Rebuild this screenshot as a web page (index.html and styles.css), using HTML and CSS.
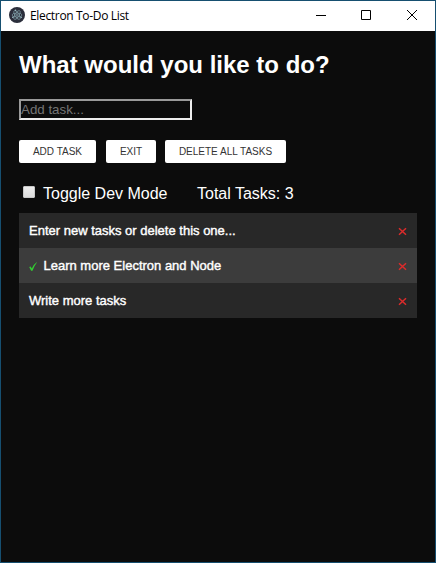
FILE: index.html
```html
<!DOCTYPE html>
<html lang="en">
<head>
<meta charset="utf-8">
<title>Electron To-Do List</title>
<link rel="stylesheet" href="styles.css">
</head>
<body>
<div class="window">
  <header class="titlebar">
    <svg class="logo" width="16" height="16" viewBox="0 0 16 16">
      <circle cx="8" cy="8" r="8" fill="#2b2e3b"/>
      <g fill="none" stroke="#7f9ea8" stroke-width=".7">
        <ellipse cx="8" cy="8" rx="5" ry="2"/>
        <ellipse cx="8" cy="8" rx="5" ry="2" transform="rotate(60 8 8)"/>
        <ellipse cx="8" cy="8" rx="5" ry="2" transform="rotate(120 8 8)"/>
      </g>
      <g fill="#a2c4cc"><circle cx="8" cy="8" r=".8"/><circle cx="3.8" cy="10.2" r=".8"/><circle cx="12.2" cy="10.2" r=".8"/><circle cx="6.5" cy="3.2" r=".8"/></g>
    </svg>
    <span class="caption">Electron To-Do List</span>
    <svg class="control" width="46" height="30" viewBox="0 0 46 30"><path d="M18 14.5h10"/></svg>
    <svg class="control" width="45" height="30" viewBox="0 0 45 30"><path d="M17.5 9.5h9v9h-9z"/></svg>
    <svg class="control" width="46" height="30" viewBox="0 0 46 30"><path d="M18 9l10 10M28 9l-10 10"/></svg>
  </header>
  <main class="content">
    <h1 class="heading">What would you like to do?</h1>
    <input class="task-input" type="text" placeholder="Add task...">
    <div class="actions">
      <button class="button add">ADD TASK</button>
      <button class="button exit">EXIT</button>
      <button class="button clear">DELETE ALL TASKS</button>
    </div>
    <div class="status">
      <label class="dev-mode"><input class="checkbox" type="checkbox"><span>Toggle Dev Mode</span></label>
      <span>Total Tasks: 3</span>
    </div>
    <ul class="tasks">
      <li class="task"><span class="name">Enter new tasks or delete this one...</span><svg class="remove" width="9" height="9" viewBox="0 0 9 9"><path d="M1 1.2l7 6.6M8 1.2L1 7.8"/></svg></li>
      <li class="task done"><svg class="check" width="8" height="9" viewBox="0 0 8 9"><path d="M.2 5L1.6 4.4L2.8 6.4Q4.5 2.4 7.6.2L7.9.6Q5.2 4 3.5 8.7H2.1Z"/></svg><span class="name">Learn more Electron and Node</span><svg class="remove" width="9" height="9" viewBox="0 0 9 9"><path d="M1 1.2l7 6.6M8 1.2L1 7.8"/></svg></li>
      <li class="task"><span class="name">Write more tasks</span><svg class="remove" width="9" height="9" viewBox="0 0 9 9"><path d="M1 1.2l7 6.6M8 1.2L1 7.8"/></svg></li>
    </ul>
  </main>
</div>
</body>
</html>
```
FILE: styles.css
```css
* { box-sizing: border-box; }
body { margin: 0; font-family: "Liberation Sans", Arial, sans-serif; color: #fff; }
.window { height: 563px; border: 1px solid #164f70; background: #0c0c0c; overflow: hidden; }
.titlebar { display: flex; align-items: center; height: 30px; padding-left: 8px; background: #fff; color: #000; }
.logo { margin-top: -2px; }
.caption { flex: 1; margin: 0 0 0 5px; font: 12px/16px "Open Sans", sans-serif; letter-spacing: -.33px; white-space: nowrap; }
.control { fill: none; stroke: #000; stroke-width: 1; }
.content { padding: 20px 18px 0; }
.heading { margin: 0; font-size: 24px; line-height: 28px; }
.task-input { display: block; width: 173px; height: 21px; margin-top: 20px; padding: 0; border: 2px solid; border-color: #9a9a9a #eee #eee #9a9a9a; background: #0c0c0c; color: #fff; font: 13.33px "Liberation Sans", sans-serif; }
.task-input::placeholder { color: #757575; opacity: 1; }
.actions { display: flex; margin-top: 20px; }
.button { height: 23px; padding: 0; border: 0; border-radius: 2px; background: #fff; color: #333; font: 10px "Liberation Sans", sans-serif; white-space: nowrap; }
.add { width: 77px; margin-right: 10px; }
.exit { width: 50px; margin-right: 9px; }
.clear { width: 121px; }
.status { display: flex; gap: 29px; height: 20px; margin-top: 21px; font-size: 16px; line-height: 20px; }
.dev-mode { display: flex; width: 149px; padding-left: 4px; white-space: nowrap; }
.checkbox { appearance: none; width: 12px; height: 12px; margin: 2px 8px 0 0; border: 1px solid #c8c8c8; border-radius: 1px; background: linear-gradient(#eee, #dcdcdc); }
.tasks { margin: 9px 0 0; padding: 0; list-style: none; }
.task { display: flex; align-items: center; height: 35px; padding: 0 10px; background: #282828; font-size: 13px; }
.done { background: #3c3c3c; }
.name { flex: 1; font-weight: 400; -webkit-text-stroke: .4px #fff; }
.check { margin: 1px 6.5px 0 0; fill: #32cd32; }
.remove { margin-top: 1px; fill: none; stroke: #dc2b2b; stroke-width: 1.5; }
```
